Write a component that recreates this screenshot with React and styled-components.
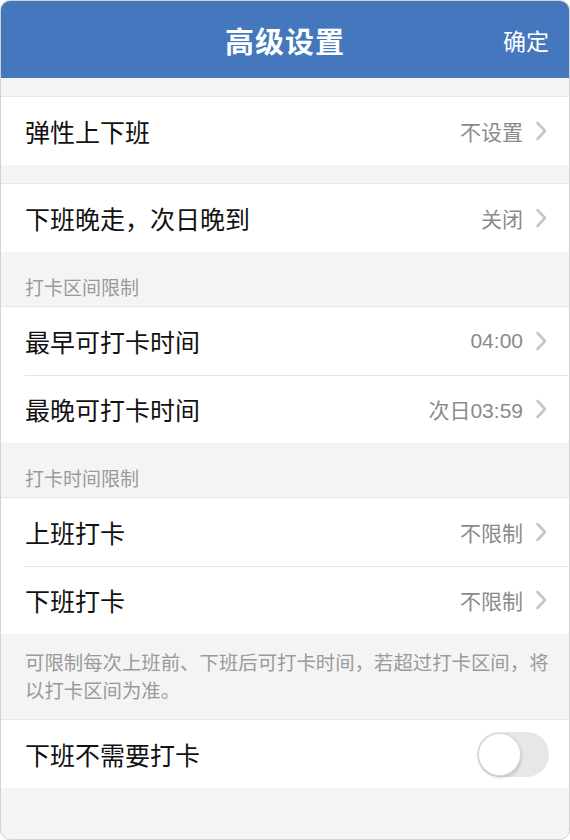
import React from 'react';
import styled, { createGlobalStyle } from 'styled-components';

const GlobalStyle = createGlobalStyle`
    html, body {
        margin: 0;
        padding: 0;
        background: #ffffff;
    }
    body {
        font-family: "Noto Sans CJK SC", "Noto Sans", sans-serif;
    }
`

const Frame = styled.div`
    box-sizing: border-box;
    width: 570px;
    height: 840px;
    border: 1px solid #d3d3d3;
    border-radius: 10px;
    overflow: hidden;
    background: #f4f4f4;
    display: flex;
    flex-direction: column;
`

const Header = styled.div`
    height: 77px;
    flex-shrink: 0;
    background: #4477bd;
    color: #fff;
    display: grid;
    grid-template-columns: 90px 1fr 90px;
    align-items: center;
`

const Title = styled.div`
    grid-column: 2;
    text-align: center;
    font-size: 29px;
    font-weight: 700;
    letter-spacing: 1px;
`

const Confirm = styled.div`
    grid-column: 3;
    justify-self: end;
    padding-right: 20px;
    font-size: 23px;
`

const Spacer = styled.div`
    height: 18px;
    flex-shrink: 0;
`

const Group = styled.div`
    background: #fff;
    border-top: 1px solid #e6e6e6;
    flex-shrink: 0;
`

const Row = styled.div`
    position: relative;
    height: 68px;
    display: flex;
    align-items: center;
    padding: 0 22px 0 24px;

    & + &::before {
        content: "";
        position: absolute;
        top: 0;
        left: 24px;
        right: 0;
        border-top: 1px solid #e4e4e4;
    }
`

const Label = styled.div`
    flex: 1;
    font-size: 25px;
    color: #111;
`

const Value = styled.div`
    font-family: "Liberation Sans", "Noto Sans CJK SC", sans-serif;
    font-size: 21px;
    color: #8a8a8a;
    margin-right: 12px;
`

const SectionTitle = styled.div`
    height: 54px;
    box-sizing: border-box;
    padding: 22px 24px 0;
    line-height: 26px;
    font-size: 19px;
    color: #9a9a9a;
    flex-shrink: 0;
`

const Note = styled.div`
    padding: 14px 8px 15px 24px;
    font-size: 19.4px;
    line-height: 28px;
    color: #9a9a9a;
    flex-shrink: 0;
`

const Switch = styled.div`
    position: relative;
    width: 72px;
    height: 45px;
    margin-right: -2px;
    border-radius: 23px;
    background: linear-gradient(90deg, #dadada, #e8e8e8 60%, #e6e6e6);
`

const Knob = styled.div`
    position: absolute;
    top: 1px;
    left: ${p => p.on ? '28px' : '1px'};
    width: 41px;
    height: 41px;
    border-radius: 50%;
    background: #fff;
    border: 1px solid #d9d9d9;
    box-shadow: 1px 2px 3px rgba(0,0,0,0.14);
`

function Chevron(){
    return(
        <svg width="12" height="20" viewBox="0 0 12 20">
            <path d="M2.5 2 L10 10 L2.5 18" fill="none" stroke="#c6c6ca" strokeWidth="2.6" strokeLinecap="round" strokeLinejoin="round" />
        </svg>
    );
}

function LinkRow(props){
    return(
        <Row>
            <Label>{props.label}</Label>
            <Value>{props.value}</Value>
            <Chevron />
        </Row>
    );
}

function App(){
    return(
        <Frame>
            <GlobalStyle />
            <Header>
                <Title>高级设置</Title>
                <Confirm>确定</Confirm>
            </Header>

            <Spacer />
            <Group>
                <LinkRow label="弹性上下班" value="不设置" />
            </Group>

            <Spacer />
            <Group>
                <LinkRow label="下班晚走，次日晚到" value="关闭" />
            </Group>

            <SectionTitle>打卡区间限制</SectionTitle>
            <Group>
                <LinkRow label="最早可打卡时间" value="04:00" />
                <LinkRow label="最晚可打卡时间" value="次日03:59" />
            </Group>

            <SectionTitle>打卡时间限制</SectionTitle>
            <Group>
                <LinkRow label="上班打卡" value="不限制" />
                <LinkRow label="下班打卡" value="不限制" />
            </Group>
            <Note>可限制每次上班前、下班后可打卡时间，若超过打卡区间，将以打卡区间为准。</Note>

            <Group>
                <Row>
                    <Label>下班不需要打卡</Label>
                    <Switch><Knob on={false} /></Switch>
                </Row>
            </Group>
        </Frame>
    );
}

export default App;
